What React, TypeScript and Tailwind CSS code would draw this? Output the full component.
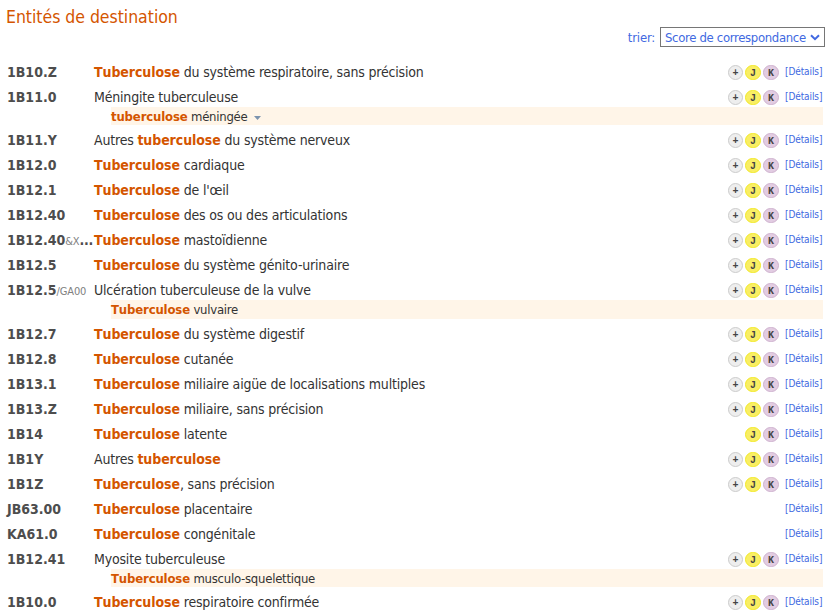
import type { ReactNode } from "react";

type Entity = {
  code: string;
  suffix?: string;
  cut?: boolean;
  title: string;
  badges: string;
  sub?: string;
  menu?: boolean;
  subHeight?: string;
};

const entities: Entity[] = [
  { code: "1B10.Z", title: "*Tuberculose* du système respiratoire, sans précision", badges: "+JK" },
  { code: "1B11.0", title: "Méningite tuberculeuse", badges: "+JK", sub: "*tuberculose* méningée", menu: true },
  { code: "1B11.Y", title: "Autres *tuberculose* du système nerveux", badges: "+JK" },
  { code: "1B12.0", title: "*Tuberculose* cardiaque", badges: "+JK" },
  { code: "1B12.1", title: "*Tuberculose* de l'œil", badges: "+JK" },
  { code: "1B12.40", title: "*Tuberculose* des os ou des articulations", badges: "+JK" },
  { code: "1B12.40", suffix: "&X", cut: true, title: "*Tuberculose* mastoïdienne", badges: "+JK" },
  { code: "1B12.5", title: "*Tuberculose* du système génito-urinaire", badges: "+JK" },
  { code: "1B12.5", suffix: "/GA00", title: "Ulcération tuberculeuse de la vulve", badges: "+JK", sub: "*Tuberculose* vulvaire", subHeight: "h-[19px]" },
  { code: "1B12.7", title: "*Tuberculose* du système digestif", badges: "+JK" },
  { code: "1B12.8", title: "*Tuberculose* cutanée", badges: "+JK" },
  { code: "1B13.1", title: "*Tuberculose* miliaire aigüe de localisations multiples", badges: "+JK" },
  { code: "1B13.Z", title: "*Tuberculose* miliaire, sans précision", badges: "+JK" },
  { code: "1B14", title: "*Tuberculose* latente", badges: "JK" },
  { code: "1B1Y", title: "Autres *tuberculose*", badges: "+JK" },
  { code: "1B1Z", title: "*Tuberculose*, sans précision", badges: "+JK" },
  { code: "JB63.00", title: "*Tuberculose* placentaire", badges: "" },
  { code: "KA61.0", title: "*Tuberculose* congénitale", badges: "" },
  { code: "1B12.41", title: "Myosite tuberculeuse", badges: "+JK", sub: "*Tuberculose* musculo-squelettique" },
  { code: "1B10.0", title: "*Tuberculose* respiratoire confirmée", badges: "+JK" },
];

const badgeStyles: Record<string, string> = {
  "+": "w-[15px] bg-[#eeeeee] border-[#cccccc]",
  J: "w-4 bg-[#f9ee64] border-[#f2e926]",
  K: "w-4 bg-[#e2cce2] border-[#cfb2cf]",
};

function highlight(text: string, boldClass: string): ReactNode {
  return text.split("*").map((part, i) =>
    i % 2 ? (
      <b key={i} className={`font-bold text-[#d45500] [font-kerning:none] ${boldClass}`}>{part}</b>
    ) : (
      <span key={i}>{part}</span>
    ),
  );
}

function Row({ entity }: { entity: Entity }) {
  return (
    <>
      <div className="flex h-[25px] pt-[5px] pl-[7px] leading-5">
        <div className="w-[87px] shrink-0 whitespace-nowrap text-[14px] font-bold text-[#4d4d4d]">
          {entity.code}
          {entity.suffix && <span className="text-[11px] font-normal tracking-[-0.1px] text-[#808080]">{entity.suffix}</span>}
          {entity.cut && <span className="tracking-[-0.3px]">...</span>}
        </div>
        <div className="grow whitespace-nowrap text-[14px] tracking-[-0.19px] text-[#333333]">
          {highlight(entity.title, "tracking-[-0.08px]")}
        </div>
        <div className="flex shrink-0 gap-[2px] pt-[3px] pr-[6px]">
          {entity.badges.split("").map((b) => (
            <span
              key={b}
              className={`flex h-[15px] items-center justify-center rounded-full border pt-[2px] font-['Liberation_Mono',monospace] text-[10px] leading-none font-bold text-[#444444] ${badgeStyles[b]}`}
            >
              {b}
            </span>
          ))}
        </div>
        <a className="mr-[6px] w-[38px] shrink-0 text-[10px] tracking-[-0.1px] whitespace-nowrap text-[#4169e1]">[Détails]</a>
      </div>
      {entity.sub && (
        <div className={`mr-[6px] ml-[111px] flex items-center bg-[#fff5e8] text-[13px] leading-[18px] tracking-[-0.25px] whitespace-pre text-[#333333] ${entity.subHeight ?? "h-[18px] pt-[2px]"}`}>
          {highlight(entity.sub, "tracking-[-0.15px]")}
          {entity.menu && (
            <svg className="mt-[2px] ml-[6px]" width="7" height="4" viewBox="0 0 7 4">
              <path d="M0 0h7L3.5 4z" fill="#7c93ae" />
            </svg>
          )}
        </div>
      )}
    </>
  );
}

export default function App() {
  return (
    <main className="h-[612px] w-[829px] overflow-hidden bg-white font-['DejaVu_Sans_Condensed','DejaVu_Sans',sans-serif]">
      <h1 className="h-[27px] pt-[5px] pl-[6px] text-[17.5px] leading-6 font-normal tracking-[-0.03px] text-[#d45500]">Entités de destination</h1>
      <div className="flex h-[30px] items-start justify-end pr-1 text-[13px] leading-[21px] tracking-[-0.2px] text-[#4169e1]">
        <span className="mr-[5px]">trier:</span>
        <div className="flex h-5 w-[165px] items-center justify-between border border-[#767676] pr-[4px] pl-[4px] whitespace-nowrap">
          <span className="tracking-[-0.33px]">Score de correspondance</span>
          <svg width="10" height="7" viewBox="0 0 10 7">
            <path d="M1 1.2l4 4 4-4" fill="none" stroke="#4169e1" strokeWidth="2" />
          </svg>
        </div>
      </div>
      {entities.map((e, i) => (
        <Row key={i} entity={e} />
      ))}
    </main>
  );
}
